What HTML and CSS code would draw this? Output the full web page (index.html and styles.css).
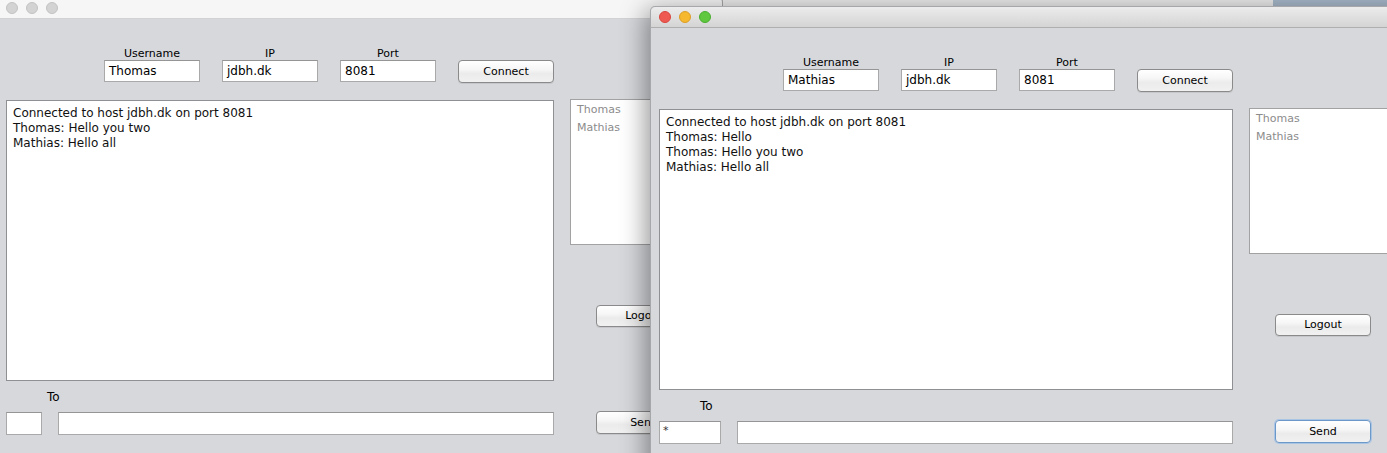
FILE: index.html
```html
<!DOCTYPE html>
<html lang="en">
<head>
<meta charset="utf-8">
<title>Chat clients</title>
<link rel="stylesheet" href="styles.css">
</head>
<body>
<div class="desk">
  <div class="win-other"></div>

  <div class="win win-back">
    <div class="titlebar">
      <span class="light"></span><span class="light"></span><span class="light"></span>
    </div>
    <div class="content">
      <div class="main">
        <div class="conn">
          <div class="cell"><span class="lbl">Username</span><div class="field">Thomas</div></div>
          <div class="cell"><span class="lbl">IP</span><div class="field">jdbh.dk</div></div>
          <div class="cell"><span class="lbl">Port</span><div class="field">8081</div></div>
          <div class="btn btn-connect">Connect</div>
        </div>
        <div class="chat">
          <div>Connected to host jdbh.dk on port 8081</div>
          <div>Thomas: Hello you two</div>
          <div>Mathias: Hello all</div>
        </div>
        <div class="to-label">To</div>
        <div class="send-row">
          <div class="field field-b to-field"></div>
          <div class="field field-b msg-field"></div>
        </div>
      </div>
      <div class="side">
        <div class="users"><div>Thomas</div><div>Mathias</div></div>
        <div class="btn btn-logout">Logout</div>
        <div class="btn btn-send">Send</div>
      </div>
    </div>
  </div>

  <div class="win win-front">
    <div class="titlebar">
      <span class="light red"></span><span class="light yellow"></span><span class="light green"></span>
    </div>
    <div class="content">
      <div class="main">
        <div class="conn">
          <div class="cell"><span class="lbl">Username</span><div class="field">Mathias</div></div>
          <div class="cell"><span class="lbl">IP</span><div class="field">jdbh.dk</div></div>
          <div class="cell"><span class="lbl">Port</span><div class="field">8081</div></div>
          <div class="btn btn-connect">Connect</div>
        </div>
        <div class="chat">
          <div>Connected to host jdbh.dk on port 8081</div>
          <div>Thomas: Hello</div>
          <div>Thomas: Hello you two</div>
          <div>Mathias: Hello all</div>
        </div>
        <div class="to-label">To</div>
        <div class="send-row">
          <div class="field field-b to-field"><span class="star">*</span></div>
          <div class="field field-b msg-field"></div>
        </div>
      </div>
      <div class="side">
        <div class="users"><div>Thomas</div><div>Mathias</div></div>
        <div class="btn btn-logout">Logout</div>
        <div class="btn btn-send focused">Send</div>
      </div>
    </div>
  </div>
</div>
</body>
</html>
```
FILE: styles.css
```css
html, body {
  margin: 0;
  padding: 0;
  width: 1387px;
  height: 453px;
  overflow: hidden;
}
body {
  background: #a8b9cb;
  font-family: "DejaVu Sans", "Liberation Sans", sans-serif;
  color: #000;
}
.desk {
  position: relative;
  width: 1387px;
  height: 453px;
  overflow: hidden;
}
.win-other {
  position: absolute;
  left: 722px;
  top: -20px;
  width: 550px;
  height: 40px;
  background: #ececec;
  border-left: 1px solid #c9c9c9;
}
.win {
  position: absolute;
  background: #d6d8dc;
  box-sizing: border-box;
  border: 1px solid rgba(0, 0, 0, 0.22);
  border-bottom: none;
  border-radius: 5px 5px 0 0;
}
.win-back {
  left: -3px;
  top: -3px;
  width: 726px;
  height: 480px;
}
.win-front {
  left: 650px;
  top: 6px;
  width: 770px;
  height: 470px;
  box-shadow: -4px 4px 26px rgba(0, 0, 0, 0.42);
}
.titlebar {
  display: flex;
  gap: 8px;
  padding: 4px 0 0 8px;
  height: 16px;
  border-radius: 5px 5px 0 0;
}
.win-back .titlebar {
  background: #f6f6f6;
  border-bottom: 1px solid #d2d2d2;
}
.win-front .titlebar {
  background: linear-gradient(to bottom, #ececec, #d4d4d4);
  border-bottom: 1px solid #afafaf;
}
.light {
  width: 12px;
  height: 12px;
  box-sizing: border-box;
  border-radius: 50%;
  background: #d3d3d3;
  border: 1px solid #c3c3c3;
}
.light.red { background: #ee5a52; border-color: #d8463f; }
.light.yellow { background: #f5b82f; border-color: #dc9e27; }
.light.green { background: #5fc83f; border-color: #4aad30; }

.content {
  display: flex;
  gap: 16px;
  padding: 0 8px;
}
.main {
  flex: none;
  display: flex;
  flex-direction: column;
}
.win-back .main { width: 548px; }
.win-front .main { width: 574px; }

.conn {
  display: flex;
  justify-content: flex-end;
  align-items: flex-start;
  gap: 22px;
  padding-top: 28px;
}
.cell {
  display: flex;
  flex-direction: column;
  align-items: center;
}
.lbl {
  font-size: 11px;
  line-height: 13px;
}
.field {
  width: 96px;
  height: 22px;
  box-sizing: border-box;
  background: #fff;
  border: 1px solid #a9a9a9;
  border-top-color: #959595;
  font-size: 12px;
  line-height: 20px;
  padding: 0 4px;
}
.field-b { height: 23px; }
.btn {
  width: 96px;
  height: 22px;
  box-sizing: border-box;
  border: 1px solid #8a8a8a;
  border-radius: 4px;
  background: linear-gradient(to bottom, #ffffff 0%, #f6f6f6 40%, #ebebeb 60%, #f1f1f1 100%);
  font-size: 11px;
  line-height: 20px;
  text-align: center;
  box-shadow: 0 1px 0 rgba(0, 0, 0, 0.08);
}
.btn-connect {
  margin-top: 13px;
  height: 23px;
  line-height: 21px;
}
.chat {
  margin-top: 17px;
  height: 281px;
  box-sizing: border-box;
  background: #fff;
  border: 1px solid #8f9093;
  padding: 5px 6px;
  font-size: 12px;
  line-height: 15px;
  color: #111;
}
.to-label {
  font-size: 12px;
  line-height: 14px;
  margin-top: 9px;
  padding-left: 41px;
}
.send-row {
  display: flex;
  gap: 16px;
  margin-top: 8px;
}
.win-back .to-field { width: 36px; }
.win-front .to-field { width: 62px; }
.to-field { padding: 0 3px; }
.msg-field { flex: 1; width: auto; }
.star {
  font-size: 11px;
  position: relative;
  top: -2px;
  color: #333;
}
.side {
  width: 148px;
  flex: none;
  display: flex;
  flex-direction: column;
  padding-top: 80px;
}
.users {
  height: 146px;
  box-sizing: border-box;
  background: #fff;
  border: 1px solid #a2a2a2;
  padding: 1px 6px;
  font-size: 11px;
  line-height: 18px;
  color: #8c8c8c;
}
.btn-logout {
  margin: 60px 0 0 26px;
}
.btn-send {
  margin: 84px 0 0 26px;
  height: 23px;
  line-height: 21px;
}
.btn.focused {
  border-color: #6c97c9;
  box-shadow: 0 0 0 1px #a8c5e6;
}
```
